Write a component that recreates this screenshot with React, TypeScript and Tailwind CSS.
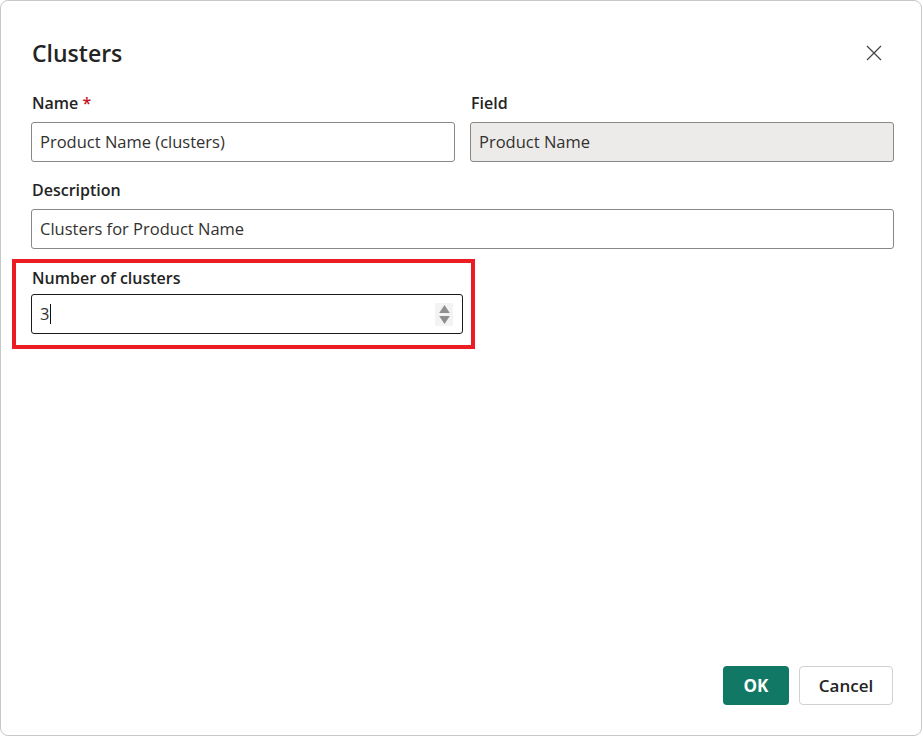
import React from "react";

const font = { fontFamily: '"Open Sans", "Noto Sans", sans-serif' };

export default function App() {
  return (
    <div className="w-[923px] h-[737px] bg-white" style={font}>
      <div className="relative w-[922px] h-[736px] border border-[#c8c8c8] rounded-lg bg-white flex flex-col pl-[30px] pr-[27px] pt-[33px] pb-[30px] text-[#242424]">
        {/* header */}
        <div className="flex items-center justify-between h-[38px]">
          <h1 className="text-[23px] leading-[32px] font-semibold pl-[1px]">Clusters</h1>
          <button className="w-[32px] h-[32px] mr-[4px] flex items-center justify-center text-[#424242]">
            <svg width="16" height="16" viewBox="0 0 16 16" fill="none">
              <path d="M1 1 L15 15 M15 1 L1 15" stroke="#424242" strokeWidth="1.2" />
            </svg>
          </button>
        </div>

        {/* Name / Field */}
        <div className="grid grid-cols-2 gap-x-[15px] mt-[20px]">
          <div className="flex flex-col">
            <label className="text-[16px] leading-[22px] font-semibold pl-[1px]">
              Name <span className="text-[#c50f1f]">*</span>
            </label>
            <div className="mt-[8px] h-[40px] border border-[#8a8886] rounded-[3px] flex items-center px-[8px] text-[16.5px] text-[#323130]">
              Product Name (clusters)
            </div>
          </div>
          <div className="flex flex-col">
            <label className="text-[16px] leading-[22px] font-semibold pl-[1px]">Field</label>
            <div className="mt-[8px] h-[40px] border border-[#8a8886] rounded-[3px] bg-[#edebe9] flex items-center px-[8px] text-[16.5px] text-[#323130]">
              Product Name
            </div>
          </div>
        </div>

        {/* Description */}
        <div className="flex flex-col mt-[17px]">
          <label className="text-[16px] leading-[22px] font-semibold pl-[1px]">Description</label>
          <div className="mt-[8px] h-[40px] border border-[#8a8886] rounded-[3px] flex items-center px-[8px] text-[16.5px] text-[#323130]">
            Clusters for Product Name
          </div>
        </div>

        {/* Number of clusters (highlighted) */}
        <div className="mt-[10px] ml-[-19px] w-[463px] border-[4px] border-[#ec1c24] pl-[15px] pr-[8px] pt-[4px] pb-[11px] flex flex-col">
          <label className="text-[16px] leading-[22px] font-semibold pl-[1px]">Number of clusters</label>
          <div className="mt-[5px] h-[40px] border border-[#1b1b1b] rounded-[3px] flex items-center pl-[8px] pr-[9px] text-[16.5px] text-[#323130]">
            <span>3</span>
            <span className="w-[1px] h-[20px] bg-[#111] ml-[1px]" />
            <div className="ml-auto w-[18px] h-[23px] bg-[#f3f3f3] flex flex-col items-center justify-center gap-[3px]">
              <svg width="11" height="8" viewBox="0 0 12 9">
                <path d="M6 0 L12 9 L0 9 Z" fill="#8f8f8f" />
              </svg>
              <svg width="11" height="8" viewBox="0 0 12 9">
                <path d="M0 0 L12 0 L6 9 Z" fill="#8f8f8f" />
              </svg>
            </div>
          </div>
        </div>

        <div className="flex-1" />

        {/* footer */}
        <div className="flex justify-end gap-[10px] pr-[1px]">
          <button className="w-[66px] h-[39px] rounded-[4px] bg-[#117865] text-white text-[17px] font-bold">
            OK
          </button>
          <button className="w-[94px] h-[39px] rounded-[4px] border border-[#d1d1d1] bg-white text-[#242424] text-[17px] font-semibold">
            Cancel
          </button>
        </div>
      </div>
    </div>
  );
}
